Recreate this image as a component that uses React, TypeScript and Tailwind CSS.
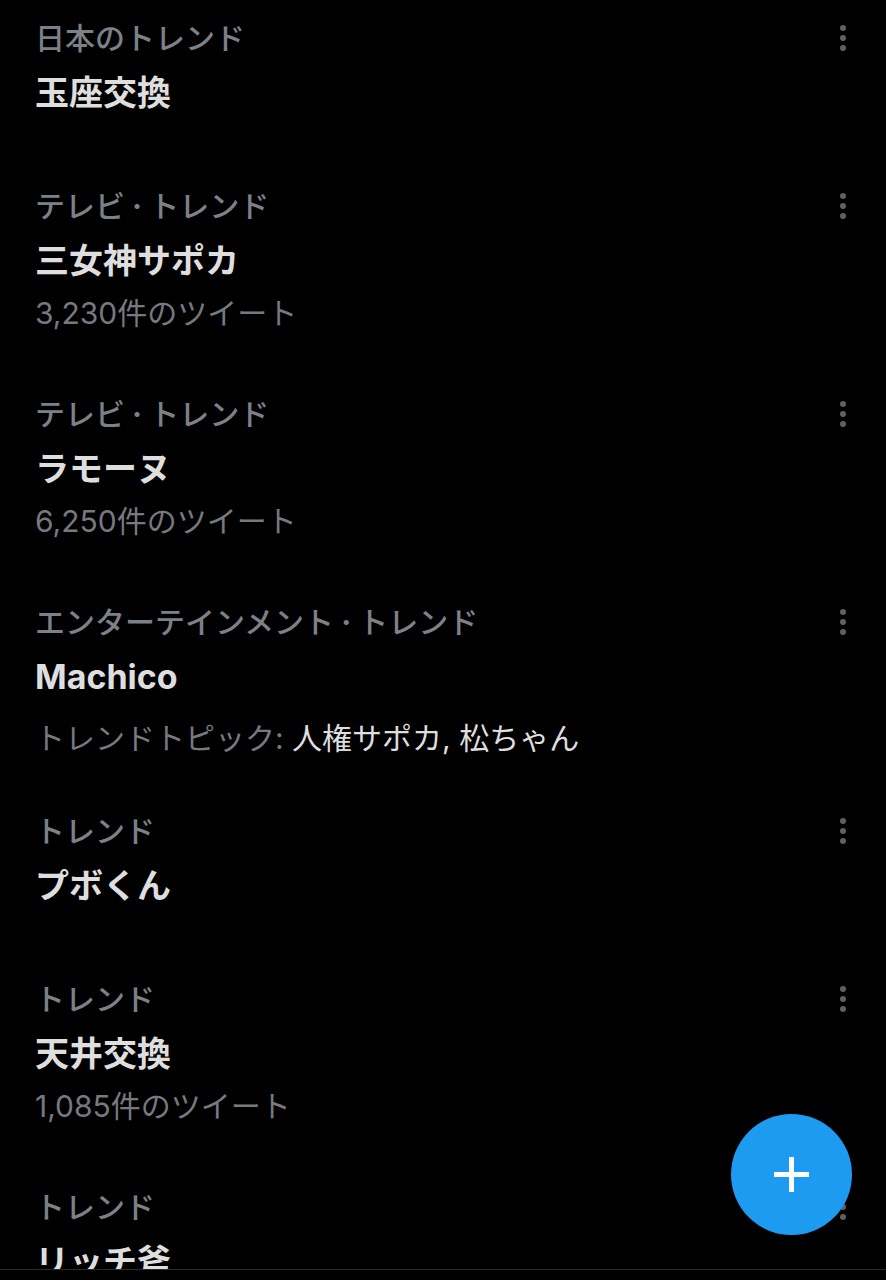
import React from 'react';
import clsx from 'clsx';

interface Trend {
    genre?: string;
    label: string;
    title: string;
    count?: string;
    topics?: string[];
}

const trends: Trend[] = [
    { label: '日本のトレンド', title: '玉座交換' },
    { genre: 'テレビ', label: 'トレンド', title: '三女神サポカ', count: '3,230件のツイート' },
    { genre: 'テレビ', label: 'トレンド', title: 'ラモーヌ', count: '6,250件のツイート' },
    { genre: 'エンターテインメント', label: 'トレンド', title: 'Machico', topics: ['人権サポカ', '松ちゃん'] },
    { label: 'トレンド', title: 'プボくん' },
    { label: 'トレンド', title: '天井交換', count: '1,085件のツイート' },
    { label: 'トレンド', title: 'リッチ斧' },
];

const MoreIcon = () => (
    <svg width="8" height="28" viewBox="0 0 8 28" fill="currentColor" aria-hidden="true">
        <circle cx="4" cy="4" r="3" />
        <circle cx="4" cy="14" r="3" />
        <circle cx="4" cy="24" r="3" />
    </svg>
);

const PlusIcon = () => (
    <svg width="35" height="35" viewBox="0 0 35 35" stroke="currentColor" strokeWidth="5" aria-hidden="true">
        <path d="M17.5 0v35M0 17.5h35" />
    </svg>
);

const TrendItem = ({ trend }: { trend: Trend }) => (
    <li
        className={clsx(
            'flex items-start justify-between pl-[35px] pr-[31px]',
            trend.topics ? 'min-h-[209px]' : trend.count ? 'min-h-[208px]' : 'min-h-[168px]'
        )}
    >
        <div className="min-w-0 flex-1">
            <p className="text-[30px] leading-[40px] font-medium text-[#7c8088]">
                {trend.genre && (
                    <>
                        {trend.genre}
                        <span className="font-bold"> · </span>
                    </>
                )}
                {trend.label}
            </p>
            <h2 className="mt-[15px] text-[34px] leading-[40px] font-bold text-[#dedede]">
                {trend.title}
            </h2>
            {trend.count && (
                <p className="mt-[12px] text-[30px] leading-[40px] text-[#76797f]">{trend.count}</p>
            )}
            {trend.topics && (
                <p className="mt-[21px] text-[30px] leading-[40px] text-[#76797f]">
                    トレンドトピック: <span className="text-[#dedede]">{trend.topics.join(', ')}</span>
                </p>
            )}
        </div>
        <button type="button" aria-label="その他" className="flex h-[40px] w-[24px] items-center justify-center text-[#606060]">
            <MoreIcon />
        </button>
    </li>
);

const App = () => {
    return (
        <div className="flex h-screen flex-col bg-black font-['Inter','Noto_Sans_CJK_JP',sans-serif]">
            <main className="min-h-0 flex-1 overflow-hidden pt-[18px]">
                <ul>
                    {trends.map((trend, i) => (
                        <TrendItem key={i} trend={trend} />
                    ))}
                </ul>
            </main>

            {/* Bottom bar edge */}
            <div className="h-[11px] shrink-0 border-t border-[#2a2a2a]" />

            {/* Compose */}
            <button
                type="button"
                aria-label="ツイートする"
                className="fixed right-[34px] bottom-[45px] flex size-[121px] items-center justify-center rounded-full bg-[#1d9bf0] text-white"
            >
                <PlusIcon />
            </button>
        </div>
    );
};

export default App;
